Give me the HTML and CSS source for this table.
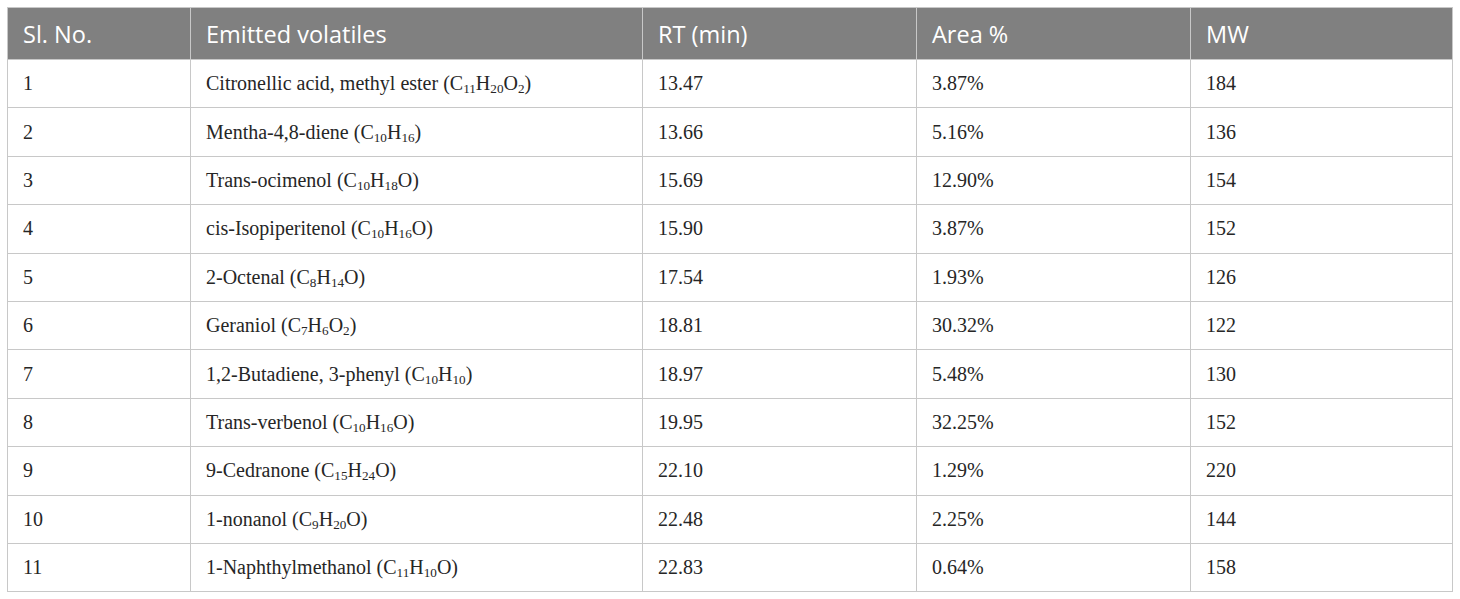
FILE: index.html
```html
<!DOCTYPE html>
<html>
<head>
<meta charset="utf-8">
<link rel="stylesheet" href="styles.css">
</head>
<body>
<table class="data">
  <colgroup>
    <col class="c1"><col class="c2"><col class="c3"><col class="c4"><col class="c5">
  </colgroup>
  <thead>
    <tr><th>Sl. No.</th><th>Emitted volatiles</th><th>RT (min)</th><th>Area %</th><th>MW</th></tr>
  </thead>
  <tbody>
    <tr><td>1</td><td>Citronellic acid, methyl ester (C<sub>11</sub>H<sub>20</sub>O<sub>2</sub>)</td><td>13.47</td><td>3.87%</td><td>184</td></tr>
    <tr><td>2</td><td>Mentha-4,8-diene (C<sub>10</sub>H<sub>16</sub>)</td><td>13.66</td><td>5.16%</td><td>136</td></tr>
    <tr><td>3</td><td>Trans-ocimenol (C<sub>10</sub>H<sub>18</sub>O)</td><td>15.69</td><td>12.90%</td><td>154</td></tr>
    <tr><td>4</td><td>cis-Isopiperitenol (C<sub>10</sub>H<sub>16</sub>O)</td><td>15.90</td><td>3.87%</td><td>152</td></tr>
    <tr><td>5</td><td>2-Octenal (C<sub>8</sub>H<sub>14</sub>O)</td><td>17.54</td><td>1.93%</td><td>126</td></tr>
    <tr><td>6</td><td>Geraniol (C<sub>7</sub>H<sub>6</sub>O<sub>2</sub>)</td><td>18.81</td><td>30.32%</td><td>122</td></tr>
    <tr><td>7</td><td>1,2-Butadiene, 3-phenyl (C<sub>10</sub>H<sub>10</sub>)</td><td>18.97</td><td>5.48%</td><td>130</td></tr>
    <tr><td>8</td><td>Trans-verbenol (C<sub>10</sub>H<sub>16</sub>O)</td><td>19.95</td><td>32.25%</td><td>152</td></tr>
    <tr><td>9</td><td>9-Cedranone (C<sub>15</sub>H<sub>24</sub>O)</td><td>22.10</td><td>1.29%</td><td>220</td></tr>
    <tr><td>10</td><td>1-nonanol (C<sub>9</sub>H<sub>20</sub>O)</td><td>22.48</td><td>2.25%</td><td>144</td></tr>
    <tr><td>11</td><td>1-Naphthylmethanol (C<sub>11</sub>H<sub>10</sub>O)</td><td>22.83</td><td>0.64%</td><td>158</td></tr>
  </tbody>
</table>
</body>
</html>
```
FILE: styles.css
```css
html, body {
  margin: 0;
  padding: 0;
  background: #ffffff;
}

body {
  padding: 7px 8px 0 7px;
}

.data {
  border-collapse: collapse;
  table-layout: fixed;
  width: 1445px;
  font-family: "Liberation Serif", "Times New Roman", serif;
  font-size: 20px;
  color: #262626;
}

.c1 { width: 183px; }
.c2 { width: 452px; }
.c3 { width: 274px; }
.c4 { width: 274px; }
.c5 { width: 262px; }

.data th,
.data td {
  border: 1px solid #c8c8c8;
  padding: 0 15px;
  text-align: left;
  vertical-align: middle;
}

.data th {
  background: #808080;
  color: #ffffff;
  font-family: "Open Sans", "Liberation Sans", sans-serif;
  font-weight: 400;
  font-size: 23.5px;
  height: 51px;
}

.data td {
  height: 47.4px;
}

.data sub {
  font-size: 0.66em;
  vertical-align: -0.22em;
  line-height: 0;
}
```
